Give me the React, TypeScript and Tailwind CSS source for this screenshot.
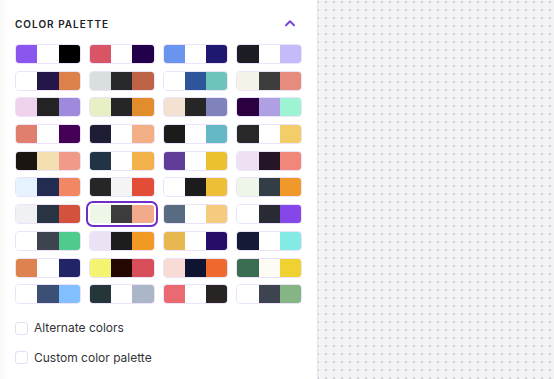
import { useState } from 'react';

const PALETTES: string[][] = [
  ['#8b55f0', '#ffffff', '#000000'], ['#d95566', '#ffffff', '#22004a'], ['#6a95ee', '#ffffff', '#1e1870'], ['#1c1c24', '#ffffff', '#c4bcfa'],
  ['#ffffff', '#25164a', '#dd814a'], ['#d9dfe1', '#27292d', '#bf6346'], ['#ffffff', '#2e559a', '#6ec4b8'], ['#f5f3e8', '#3d3d3d', '#e58c7c'],
  ['#efd3ec', '#232323', '#9f89dc'], ['#e7efc4', '#262626', '#e18d2c'], ['#f3e2d1', '#262626', '#8083bb'], ['#2a0040', '#aea0e3', '#9cf4d2'],
  ['#e07f6e', '#ffffff', '#430054'], ['#1d1d33', '#ffffff', '#f2ae84'], ['#1b1b1b', '#ffffff', '#64b8c4'], ['#282828', '#ffffff', '#f3cd68'],
  ['#1b1511', '#f3dfb1', '#f29a88'], ['#203446', '#ffffff', '#f3b249'], ['#603d98', '#ffffff', '#ebc12f'], ['#eee1f3', '#241627', '#f1877a'],
  ['#e6f3ff', '#242b51', '#f18863'], ['#262626', '#f4f4f4', '#e34d38'], ['#ffffff', '#1c1c1c', '#eebe39'], ['#eef6e8', '#333d46', '#f09829'],
  ['#f0f1f4', '#293443', '#d3523d'], ['#eef6e8', '#3c3c3c', '#f3aa8b'], ['#576c80', '#ffffff', '#f5cb7e'], ['#ffffff', '#282a34', '#8647e8'],
  ['#ffffff', '#3d444f', '#4fcc8d'], ['#ebe3f4', '#1d1d1d', '#f09a25'], ['#e7b750', '#ffffff', '#260d68'], ['#141b37', '#ffffff', '#84ebe4'],
  ['#dc834f', '#ffffff', '#212466'], ['#f3f472', '#240701', '#d74e58'], ['#f9dbd6', '#0f1433', '#ed692e'], ['#3b6e51', '#fdfbf6', '#efd131'],
  ['#ffffff', '#3b5074', '#82bffe'], ['#24363a', '#ffffff', '#acb6c9'], ['#e96a70', '#ffffff', '#292424'], ['#ffffff', '#3d444f', '#85b584'],
];

function Checkbox({ label }: { label: string }) {
  const [checked, setChecked] = useState(false);
  return (
    <label className="flex items-center gap-[6px] cursor-pointer">
      <span
        onClick={() => setChecked(!checked)}
        className={`w-[13px] h-[13px] rounded-[3px] border ${checked ? 'bg-[#7c45e0] border-[#7c45e0]' : 'bg-white border-[#e6dcf8]'}`}
      />
      <span className="text-[12px] leading-[14px] text-[#333338]">{label}</span>
    </label>
  );
}

export default function App() {
  const [selected, setSelected] = useState(25);

  return (
    <div className="flex w-[554px] h-[379px] overflow-hidden bg-white font-['Inter','Noto_Sans',sans-serif]">
      <aside className="w-[318px] shrink-0 border-r border-[#e9e3f3] bg-white px-[15px] pt-[16px] shadow-[inset_8px_0_8px_-6px_rgba(0,0,0,0.04)]">
        <div className="flex items-center justify-between h-4 mb-[12px]">
          <h2 className="text-[10px] font-semibold tracking-[0.1em] text-[#222226]">COLOR PALETTE</h2>
          <svg width="12" height="8" viewBox="0 0 12 8" className="mr-[6px] mt-[-2px]">
            <path d="M2 6.2 L6 2.2 L10 6.2" fill="none" stroke="#7c45e0" strokeWidth="2" strokeLinecap="round" strokeLinejoin="round" />
          </svg>
        </div>

        <div className="grid grid-cols-4 gap-x-[8px] gap-y-[6.7px]">
          {PALETTES.map((colors, i) => (
            <button
              key={i}
              onClick={() => setSelected(i)}
              className={`flex h-5 rounded-[4px] border overflow-hidden ${
                selected === i
                  ? 'border-white outline-2 outline-[#6b2fc7] outline-offset-[1px]'
                  : 'border-[#ece3fb]'
              }`}
            >
              {colors.map((c, j) => (
                <span key={j} className="flex-1 h-full" style={{ backgroundColor: c }} />
              ))}
            </button>
          ))}
        </div>

        <div className="mt-[17px] flex flex-col gap-[15.5px]">
          <Checkbox label="Alternate colors" />
          <Checkbox label="Custom color palette" />
        </div>
      </aside>

      <main className="flex-1 bg-[#f3f3f6] bg-[radial-gradient(circle,#cdcdd2_1.1px,transparent_1.3px)] bg-[length:8px_8px] bg-[position:4px_-2px]" />
    </div>
  );
}
